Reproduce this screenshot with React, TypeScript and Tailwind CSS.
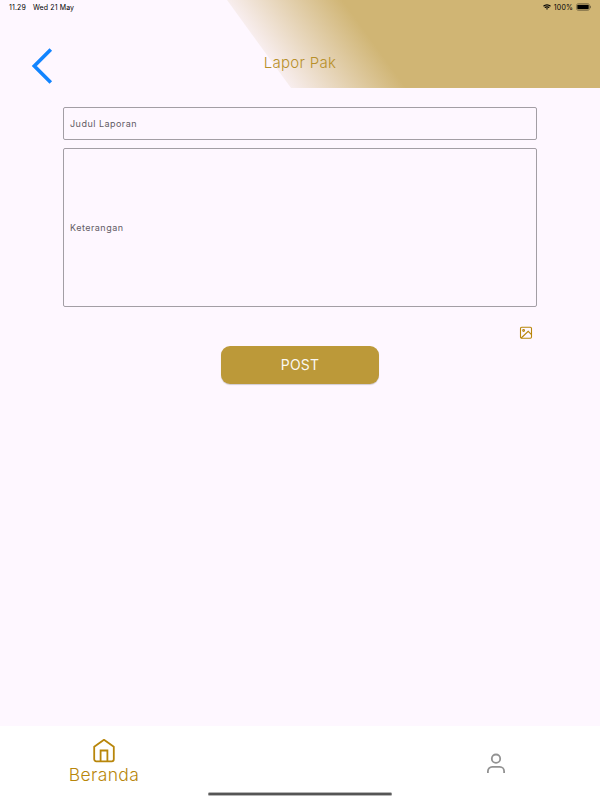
const StatusBar = () => (
  <div className="relative flex h-[14px] items-center justify-between pl-[9px] pr-[9px] text-[7px] leading-none text-black">
    <div className="flex gap-[7px] tracking-[0.12px]">
      <span>11.29</span>
      <span>Wed 21 May</span>
    </div>
    <div className="flex items-center gap-[3px]">
      <svg width="8" height="6" viewBox="0 0 16 12" fill="none" stroke="black" strokeWidth="2.4">
        <path d="M1 4.5a10 10 0 0 1 14 0M3.6 7.4a6.2 6.2 0 0 1 8.8 0" />
        <path d="M8 11.5 5.8 9.3a3.2 3.2 0 0 1 4.4 0z" fill="black" stroke="none" />
      </svg>
      <span className="tracking-[0.15px]">100%</span>
      <svg width="15" height="8" viewBox="0 0 15 8">
        <rect x="0.5" y="0.5" width="13" height="7" rx="2" fill="none" stroke="black" strokeOpacity="0.3" />
        <rect x="1.3" y="1.8" width="11.4" height="4.4" rx="0.8" fill="black" />
        <rect x="14" y="2.8" width="1" height="2.4" fill="black" fillOpacity="0.4" />
      </svg>
    </div>
  </div>
);

const Header = () => (
  <header className="relative h-[88px]">
    {/* Slanted gold panel behind the title */}
    <div className="absolute inset-y-0 right-0 w-[373px] bg-[linear-gradient(54deg,#f8eeef_51px,#d0b574_145px)] [clip-path:polygon(0_0,100%_0,100%_100%,64px_100%)]" />
    <StatusBar />
    <div className="relative grid grid-cols-3 pt-[33px]">
      <svg className="ml-[31px]" width="22" height="38" viewBox="0 0 22 38" fill="none" stroke="#1284ff" strokeWidth="3.6">
        <path d="M19.8 2.5 3.3 19 19.8 35.5" />
      </svg>
      <h1 className="pt-[6px] text-center text-[15px] font-light leading-[20px] tracking-[0.3px] text-[#b8902a]">Lapor Pak</h1>
    </div>
  </header>
);

const HomeIcon = () => (
  <svg width="26" height="26" viewBox="0 0 26 26" fill="none" stroke="#b8860b" strokeWidth="1.8" strokeLinejoin="round">
    <path d="M3.2 8.7 13 1.8l9.8 6.9v12.6a2 2 0 0 1-2 2H5.2a2 2 0 0 1-2-2z" />
    <path d="M9.6 23.3V12.5h6.8v10.8" strokeLinejoin="miter" />
  </svg>
);

const UserIcon = () => (
  <svg className="mx-auto" width="26" height="26" viewBox="0 0 26 26" fill="none" stroke="#929292" strokeWidth="1.8">
    <circle cx="13" cy="7.7" r="4.2" />
    <path d="M4.9 22v-1.8a4.3 4.3 0 0 1 4.3-4.3h7.6a4.3 4.3 0 0 1 4.3 4.3V22" />
  </svg>
);

const PictureIcon = () => (
  <svg className="mt-[19px] mr-[4px] self-end" width="14" height="14" viewBox="0 0 14 14" fill="none" stroke="#b8860b" strokeWidth="1.1">
    <rect x="1.5" y="1.3" width="11" height="11" rx="1.2" />
    <circle cx="4.6" cy="4.5" r="0.9" />
    <path d="M2.2 12 9.2 5.3l3.3 3.3" />
  </svg>
);

const BottomNav = () => (
  <nav className="relative flex h-[74px] justify-between bg-white">
    <div className="flex w-[208px] flex-col items-center pt-[12px] text-[#b8860b]">
      <HomeIcon />
      <span className="text-[17.5px] font-light leading-[22px] tracking-[0.35px]">Beranda</span>
    </div>
    <div className="w-[208px] pt-[25px]">
      <UserIcon />
    </div>
    {/* Home indicator */}
    <div className="absolute bottom-[4px] left-[208px] h-[4px] w-[184px] rounded-full border-y border-[#b5b5b5] bg-[#555]" />
  </nav>
);

export default function App() {
  return (
    <div className="flex h-[800px] w-[600px] flex-col overflow-hidden bg-[#fef7ff] font-[Inter,sans-serif]">
      <Header />
      <main className="flex flex-1 flex-col px-[63px] pt-[19px] text-[9px] tracking-[0.48px] text-[#625b65]">
        <div className="flex h-[33px] items-center rounded-[2px] border border-[#a39ea5] px-[6px]">Judul Laporan</div>
        <div className="mt-[8px] flex h-[159px] items-center rounded-[2px] border border-[#a39ea5] px-[6px]">Keterangan</div>
        <PictureIcon />
        <button className="mt-[6px] h-[38px] w-[158px] self-center rounded-[9px] bg-[#bc9939] pb-px text-[14px] tracking-[0.2px] text-white/95 shadow-[0_1px_1px_rgba(0,0,0,0.18)]">
          POST
        </button>
      </main>
      <BottomNav />
    </div>
  );
}
